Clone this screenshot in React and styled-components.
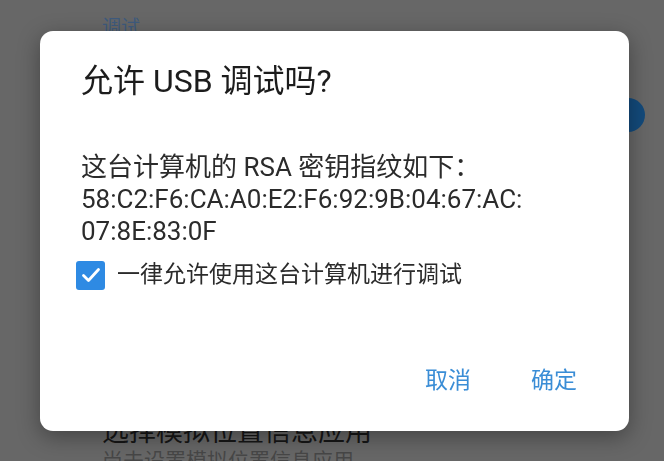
import React from "react";
import styled, { createGlobalStyle } from "styled-components";

const GlobalStyle = createGlobalStyle`
  html, body {
    margin: 0;
    padding: 0;
  }
  body {
    font-family: "Roboto", "Noto Sans CJK SC", sans-serif;
    background: #676767;
    overflow: hidden;
  }
`;

const FONT = `"Roboto", "Noto Sans CJK SC", sans-serif`;

const App = () => {
  return (
    <>
      <GlobalStyle />
      <Page>
        <SectionTitle>调试</SectionTitle>

        {/* rows under the dialog, only the switch thumb shows */}
        <PrefRow height={150}>
          <PrefText />
          <Switch>
            <Track />
            <Thumb />
          </Switch>
        </PrefRow>

        <PrefRow height={227} />

        <PrefRow>
          <PrefText>
            <PrefTitle>选择模拟位置信息应用</PrefTitle>
            <PrefSummary>尚未设置模拟位置信息应用</PrefSummary>
          </PrefText>
        </PrefRow>
      </Page>

      <Overlay>
        <Dialog>
          <Title>允许 USB 调试吗?</Title>

          <Message>
            这台计算机的 RSA 密钥指纹如下：
            <br />
            58:C2:F6:CA:A0:E2:F6:92:9B:04:67:AC:
            <br />
            07:8E:83:0F
          </Message>

          <CheckRow>
            <CheckBox>
              <svg width="24" height="24" viewBox="0 0 24 24" fill="none">
                <path
                  d="M4.5 12.5 L9.5 17.5 L19.5 6.5"
                  stroke="#fff"
                  strokeWidth="2.8"
                  strokeLinecap="round"
                  strokeLinejoin="round"
                />
              </svg>
            </CheckBox>
            <CheckLabel>一律允许使用这台计算机进行调试</CheckLabel>
          </CheckRow>

          <Actions>
            <TextButton>取消</TextButton>
            <TextButton>确定</TextButton>
          </Actions>
        </Dialog>
      </Overlay>
    </>
  );
};

export default App;

const Page = styled.div`
  height: 100vh;
  box-sizing: border-box;
  padding: 16px 19px 0 102px;
  display: flex;
  flex-direction: column;
  font-family: ${FONT};
`;

const SectionTitle = styled.div`
  font-size: 19px;
  line-height: 24px;
  color: #3e5b7e;
`;

const PrefRow = styled.div`
  display: flex;
  align-items: ${(p) => (p.height ? "center" : "flex-start")};
  justify-content: space-between;
  height: ${(p) => (p.height ? `${p.height}px` : "auto")};
  flex-shrink: 0;
`;

const PrefText = styled.div`
  display: flex;
  flex-direction: column;
`;

const PrefTitle = styled.div`
  font-size: 27px;
  line-height: 30px;
  color: #161616;
`;

const PrefSummary = styled.div`
  font-size: 21px;
  line-height: 28px;
  color: #474747;
`;

const Switch = styled.div`
  position: relative;
  width: 52px;
  height: 34px;
  display: flex;
  align-items: center;
`;

const Track = styled.div`
  width: 44px;
  height: 14px;
  border-radius: 7px;
  background: #2b4a66;
`;

const Thumb = styled.div`
  position: absolute;
  right: 0;
  top: 0;
  width: 34px;
  height: 34px;
  border-radius: 50%;
  background: #134a7b;
`;

const Overlay = styled.div`
  position: fixed;
  inset: 0;
  display: flex;
  align-items: flex-start;
  padding: 31px 35px 0 40px;
`;

const Dialog = styled.div`
  width: 589px;
  height: 400px;
  box-sizing: border-box;
  background: #ffffff;
  border-radius: 13px;
  box-shadow: 0 6px 22px rgba(0, 0, 0, 0.35);
  display: flex;
  flex-direction: column;
  font-family: ${FONT};
`;

const Title = styled.h2`
  margin: 0;
  padding: 30px 40px 0 41px;
  font-size: 32px;
  line-height: 40px;
  font-weight: 400;
  color: #1c1c1c;
`;

const Message = styled.p`
  margin: 50px 0 0;
  padding: 0 40px 0 41px;
  font-size: 26px;
  line-height: 32px;
  color: #2b2b2b;
`;

const CheckRow = styled.label`
  display: flex;
  align-items: center;
  gap: 12px;
  height: 36px;
  margin-top: 10px;
  padding-left: 36px;
`;

const CheckBox = styled.span`
  width: 29px;
  height: 29px;
  border-radius: 3px;
  background: #2e8ae3;
  display: flex;
  align-items: center;
  justify-content: center;
`;

const CheckLabel = styled.span`
  font-size: 23px;
  line-height: 30px;
  color: #2b2b2b;
`;

const Actions = styled.div`
  margin-top: auto;
  display: flex;
  justify-content: flex-end;
  gap: 32px;
  height: 48px;
  padding: 0 38px 29px 0;
`;

const TextButton = styled.button`
  border: none;
  background: none;
  padding: 0 14px;
  font-family: ${FONT};
  font-size: 23px;
  color: #3a8dd6;
  cursor: pointer;
`;
